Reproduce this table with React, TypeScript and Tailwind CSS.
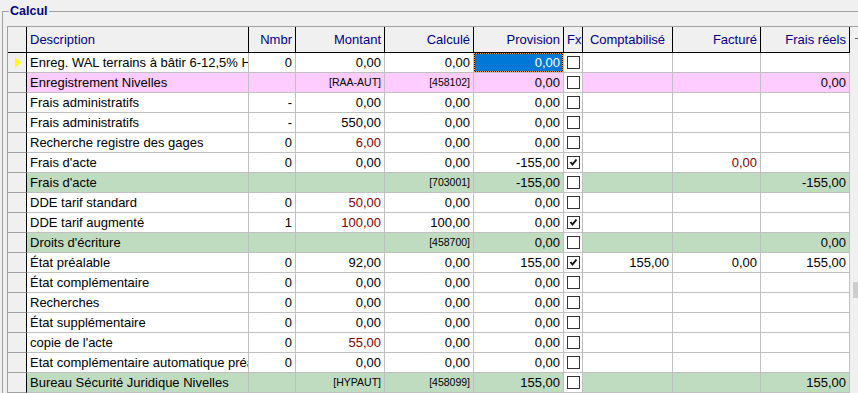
import { ReactNode } from 'react'

type Tone = 'w' | 'pink' | 'green'

type Row = {
  d: string
  n?: string
  m?: string
  mRed?: boolean
  c?: string
  p: string
  fx: boolean
  co?: string
  f?: string
  fRed?: boolean
  fr?: string
  tone: Tone
  sel?: boolean
}

const rows: Row[] = [
  { d: 'Enreg. WAL terrains à bâtir 6-12,5% HT', n: '0', m: '0,00', c: '0,00', p: '0,00', fx: false, tone: 'w', sel: true },
  { d: 'Enregistrement Nivelles', m: '[RAA-AUT]', c: '[458102]', p: '0,00', fx: false, fr: '0,00', tone: 'pink' },
  { d: 'Frais administratifs', n: '-', m: '0,00', c: '0,00', p: '0,00', fx: false, tone: 'w' },
  { d: 'Frais administratifs', n: '-', m: '550,00', c: '0,00', p: '0,00', fx: false, tone: 'w' },
  { d: 'Recherche registre des gages', n: '0', m: '6,00', mRed: true, c: '0,00', p: '0,00', fx: false, tone: 'w' },
  { d: "Frais d'acte", n: '0', m: '0,00', c: '0,00', p: '-155,00', fx: true, f: '0,00', fRed: true, tone: 'w' },
  { d: "Frais d'acte", c: '[703001]', p: '-155,00', fx: false, fr: '-155,00', tone: 'green' },
  { d: 'DDE tarif standard', n: '0', m: '50,00', mRed: true, c: '0,00', p: '0,00', fx: false, tone: 'w' },
  { d: 'DDE tarif augmenté', n: '1', m: '100,00', mRed: true, c: '100,00', p: '0,00', fx: true, tone: 'w' },
  { d: "Droits d'écriture", c: '[458700]', p: '0,00', fx: false, fr: '0,00', tone: 'green' },
  { d: 'État préalable', n: '0', m: '92,00', c: '0,00', p: '155,00', fx: true, co: '155,00', f: '0,00', fr: '155,00', tone: 'w' },
  { d: 'État complémentaire', n: '0', m: '0,00', c: '0,00', p: '0,00', fx: false, tone: 'w' },
  { d: 'Recherches', n: '0', m: '0,00', c: '0,00', p: '0,00', fx: false, tone: 'w' },
  { d: 'État supplémentaire', n: '0', m: '0,00', c: '0,00', p: '0,00', fx: false, tone: 'w' },
  { d: "copie de l'acte", n: '0', m: '55,00', mRed: true, c: '0,00', p: '0,00', fx: false, tone: 'w' },
  { d: 'Etat complémentaire automatique préalable', n: '0', m: '0,00', c: '0,00', p: '0,00', fx: false, tone: 'w' },
  { d: 'Bureau Sécurité Juridique Nivelles', m: '[HYPAUT]', c: '[458099]', p: '155,00', fx: false, fr: '155,00', tone: 'green' },
]

const toneBg: Record<Tone, string> = {
  w: 'bg-white',
  pink: 'bg-[#ffccff]',
  green: 'bg-[#c0dcc0]',
}

const cols = 'grid grid-cols-[19px_222px_47px_89px_89px_90px_19px_90px_88px_89px]'

function Head({ children, align = 'right' }: { children?: ReactNode; align?: 'left' | 'right' | 'center' }) {
  const a = align === 'left' ? 'justify-start pl-[3px]' : align === 'center' ? 'justify-center' : 'justify-end pr-[3px]'
  return (
    <div className={`flex h-[26px] items-center border-r border-b border-black bg-[#f0f0f0] text-[#000080] ${a}`}>
      {children}
    </div>
  )
}

function Cell({ children, bg, red, code, left }: { children?: ReactNode; bg: string; red?: boolean; code?: boolean; left?: boolean }) {
  return (
    <div
      className={`flex h-[20px] items-center overflow-hidden whitespace-nowrap border-r border-b border-[#c0c0c0] ${bg} ${
        left ? 'justify-start pl-[3px]' : 'justify-end pr-[3px]'
      } ${red ? 'text-[#800000]' : 'text-black'} ${code ? 'text-[10.5px] text-[#303030]' : ''}`}
    >
      {children}
    </div>
  )
}

function Check({ on }: { on: boolean }) {
  return (
    <div className="h-[20px] border-r border-b border-[#c0c0c0] bg-white pl-[3px] pt-[3px]">
      <div className="h-[13px] w-[13px] border border-[#333333] bg-white">
        {on && (
          <svg width="11" height="11" viewBox="0 0 11 11">
            <path d="M2.5 5 L4.5 7.5 L8.5 2.5" fill="none" stroke="#111" strokeWidth="2" />
          </svg>
        )}
      </div>
    </div>
  )
}

function DataRow({ r, first }: { r: Row; first: boolean }) {
  const bg = toneBg[r.tone]
  const code = r.tone !== 'w'
  return (
    <>
      <div className="flex h-[20px] items-center border-r border-b border-r-black border-b-[#a0a0a0] bg-[#f0f0f0] pl-[7px]">
        {first && (
          <svg width="6" height="11" viewBox="0 0 6 11">
            <path d="M0 0 L6 5.5 L0 11 Z" fill="#ffff00" />
          </svg>
        )}
      </div>
      <Cell bg={bg} left>
        {r.d}
      </Cell>
      <Cell bg={bg}>{r.n}</Cell>
      <Cell bg={bg} red={r.mRed} code={code}>
        {r.m}
      </Cell>
      <Cell bg={bg} code={code}>
        {r.c}
      </Cell>
      {r.sel ? (
        <div className="h-[20px] border-r border-b border-[#c0c0c0] bg-black">
          <div className="flex h-full items-center justify-end border border-dotted border-[#f0a040] bg-[#0078d7] bg-clip-padding pr-[2px] text-white">
            {r.p}
          </div>
        </div>
      ) : (
        <Cell bg={bg}>{r.p}</Cell>
      )}
      <Check on={r.fx} />
      <Cell bg={bg}>{r.co}</Cell>
      <Cell bg={bg} red={r.fRed}>
        {r.f}
      </Cell>
      <Cell bg={bg}>{r.fr}</Cell>
    </>
  )
}

export default function App() {
  return (
    <div className="h-[393px] w-[858px] overflow-hidden bg-[#f0f0f0] pl-[2px] pt-[11px] font-['Liberation_Sans',Arial,sans-serif] text-[13px] leading-none">
      <div className="relative h-[400px] border-l border-t border-[#a0a0a0] pl-[4px] pt-[14px]">
        <span className="absolute left-[6px] top-[-7px] bg-[#f0f0f0] px-[1px] text-[12.5px] font-bold text-[#000080]">Calcul</span>
        <div className="flex border-l border-t border-[#a0a0a0]">
          <div className={cols}>
            <Head />
            <Head align="left">Description</Head>
            <Head>Nmbr</Head>
            <Head>Montant</Head>
            <Head>Calculé</Head>
            <Head>Provision</Head>
            <Head align="left">Fx</Head>
            <Head align="center">Comptabilisé</Head>
            <Head>Facturé</Head>
            <Head>Frais réels</Head>
            {rows.map((r, i) => (
              <DataRow key={i} r={r} first={i === 0} />
            ))}
          </div>
          <div className="w-[8px] bg-[#f0f0f0]">
            <div className="ml-[5px] mt-[11px] h-[1px] w-[3px] bg-[#606060]" />
            <div className="ml-[3px] mt-[243px] h-[16px] w-[5px] bg-[#cdcdcd]" />
          </div>
        </div>
      </div>
    </div>
  )
}
